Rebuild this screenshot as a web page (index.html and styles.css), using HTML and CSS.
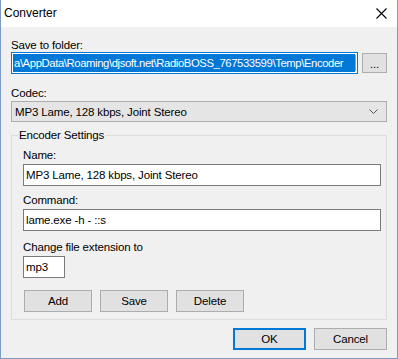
FILE: index.html
```html
<!DOCTYPE html>
<html>
<head>
<meta charset="utf-8">
<link rel="stylesheet" href="styles.css">
</head>
<body>
<div class="window">
  <div class="titlebar">
    <span class="title">Converter</span>
    <svg class="close" width="11" height="11" viewBox="0 0 11 11"><path d="M0.5 0.5 L10.5 10.5 M10.5 0.5 L0.5 10.5" stroke="#000" stroke-width="1.1" fill="none"/></svg>
  </div>
  <div class="client">
    <div class="label">Save to folder:</div>
    <div class="row">
      <div class="edit folder"><span class="sel">a\AppData\Roaming\djsoft.net\RadioBOSS_767533599\Temp\Encoder</span><span class="caret"></span></div>
      <div class="btn browse">...</div>
    </div>
    <div class="label codec-label">Codec:</div>
    <div class="combo">
      <span>MP3 Lame, 128 kbps, Joint Stereo</span>
      <svg class="chev" width="9" height="5" viewBox="0 0 9 5"><path d="M0.5 0.5 L4.5 4.5 L8.5 0.5" stroke="#555" stroke-width="1" fill="none"/></svg>
    </div>
    <div class="group">
      <span class="group-title">Encoder Settings</span>
      <div class="label name-label">Name:</div>
      <div class="edit">MP3 Lame, 128 kbps, Joint Stereo</div>
      <div class="label cmd-label">Command:</div>
      <div class="edit cmd">lame.exe -h - ::s</div>
      <div class="label ext-label">Change file extension to</div>
      <div class="edit ext">mp3</div>
      <div class="buttons">
        <div class="btn small">Add</div>
        <div class="btn small">Save</div>
        <div class="btn small">Delete</div>
      </div>
    </div>
    <div class="footer">
      <div class="btn dlg default">OK</div>
      <div class="btn dlg">Cancel</div>
    </div>
  </div>
</div>
</body>
</html>
```

FILE: styles.css
```css
html, body {
  margin: 0;
  padding: 0;
  background: #f0f0f0;
}
body {
  font-family: "Liberation Sans", Arial, sans-serif;
  font-size: 11.5px;
  letter-spacing: -0.15px;
  color: #000;
}
.window {
  width: 398px;
  height: 359px;
  box-sizing: border-box;
  border: 1px solid #7e9bc5;
  border-top: none;
  display: flex;
  flex-direction: column;
  background: #f0f0f0;
}
.titlebar {
  height: 26px;
  background: #fff;
  display: flex;
  align-items: center;
  justify-content: space-between;
  padding: 0 10px 1px 3px;
  flex-shrink: 0;
}
.title {
  font-size: 12px;
  letter-spacing: 0;
  line-height: 15px;
}
.close {
  margin-top: 1px;
}
.client {
  padding: 11px 10px 0 10px;
  display: flex;
  flex-direction: column;
}
.label {
  line-height: 14px;
  height: 14px;
  white-space: nowrap;
}
.row {
  display: flex;
  align-items: center;
  gap: 4px;
}
.edit {
  height: 22px;
  box-sizing: border-box;
  border: 1px solid #7a7a7a;
  background: #fff;
  line-height: 20px;
  padding: 0 2px;
  white-space: nowrap;
  overflow: hidden;
}
.folder {
  width: 347px;
  border-color: #0078d7;
  padding: 1px;
  display: flex;
  align-items: stretch;
}
.sel {
  flex: 1;
  min-width: 0;
  background: #0078d7;
  color: #fff;
  line-height: 18px;
  padding-left: 1px;
  white-space: nowrap;
  font-size: 11.3px;
  letter-spacing: -0.4px;
}
.caret {
  width: 1px;
  background: #ff8728;
  margin: 1px 0;
}
.btn {
  box-sizing: border-box;
  border: 1px solid #adadad;
  background: #e1e1e1;
  display: flex;
  align-items: center;
  justify-content: center;
  line-height: 14px;
}
.browse {
  width: 25px;
  height: 20px;
  padding-top: 2px;
}
.codec-label {
  margin-top: 12px;
}
.combo {
  margin-top: 1px;
  height: 21px;
  box-sizing: border-box;
  border: 1px solid #adadad;
  background: #e5e5e5;
  display: flex;
  align-items: center;
  justify-content: space-between;
  padding: 0 8px 0 3px;
}
.group {
  margin-top: 13px;
  border: 1px solid #dcdcdc;
  padding: 0 5px 7px 11px;
  display: flex;
  flex-direction: column;
}
.group-title {
  align-self: flex-start;
  margin: -8px 0 0 -5px;
  padding: 0 1px;
  background: #f0f0f0;
  line-height: 15px;
}
.name-label {
  margin-top: 5px;
}
.group .edit {
  margin-top: 2px;
}
.cmd-label {
  margin-top: 7px;
}
.ext-label {
  margin-top: 9px;
}
.group .ext {
  width: 42px;
}
.buttons {
  margin-top: 12px;
  margin-left: 1px;
  display: flex;
  gap: 8px;
}
.small {
  width: 68px;
  height: 22px;
}
.footer {
  margin-top: 8px;
  display: flex;
  justify-content: flex-end;
  gap: 8px;
}
.dlg {
  width: 73px;
  height: 22px;
}
.default {
  border: 2px solid #0078d7;
}
```
